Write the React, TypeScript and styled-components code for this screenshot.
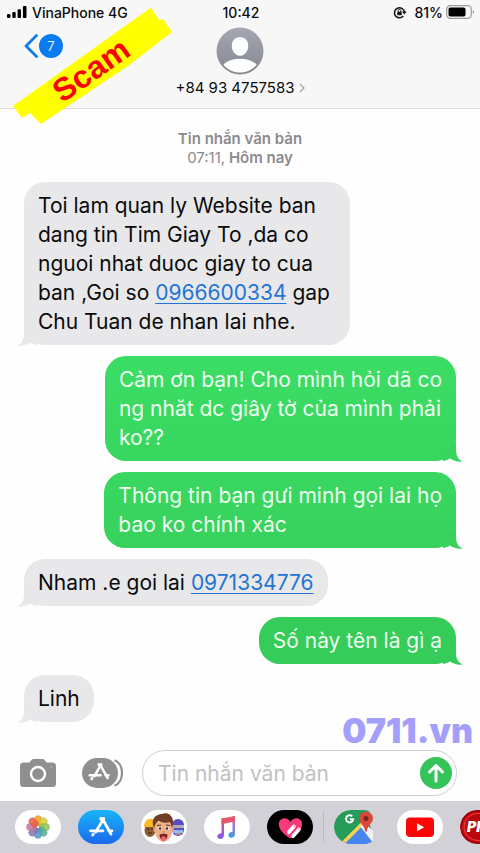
import React from "react";
import styled, { createGlobalStyle } from "styled-components";

const GlobalStyle = createGlobalStyle`
  *, *::before, *::after { box-sizing: border-box; }
  body { margin: 0; background: #fff; font-family: Inter, "Liberation Sans", sans-serif; color: #0b0b0c; }
  button { border: 0; padding: 0; background: none; font: inherit; color: inherit; cursor: pointer; }
  svg { display: block; flex: none; }
`;

const Screen = styled.div`
  position: relative;
  display: flex;
  flex-direction: column;
  min-height: 100vh;
  overflow: hidden;
  background: #fefefe;
`;

const Top = styled.header`
  background: #f7f7f7;
  border-bottom: 1px solid #dcdcde;
`;

const StatusBar = styled.div`
  display: grid;
  grid-template-columns: 1fr auto 1fr;
  align-items: center;
  height: 24px;
  padding: 0 5px 0 7px;
  font-size: 14px;
  font-weight: 500;
`;

const StatusGroup = styled.div<{ $end?: boolean }>`
  display: flex;
  align-items: center;
  justify-content: ${(p) => (p.$end ? "flex-end" : "flex-start")};
  gap: ${(p) => (p.$end ? "3px" : "5px")};
`;

const Percent = styled.span`
  margin-left: 4px;
`;

const NavBar = styled.div`
  display: grid;
  grid-template-columns: 1fr auto 1fr;
  height: 84px;
  padding: 3px 24px 0;
`;

const BackButton = styled.button`
  display: flex;
  align-items: center;
  justify-self: start;
  align-self: start;
  gap: 1px;
  height: 24px;
  margin-top: 7px;
`;

const Unread = styled.span`
  display: grid;
  place-items: center;
  width: 24px;
  height: 24px;
  border-radius: 50%;
  background: #0b7bf2;
  color: #e4f1ff;
  font-size: 13px;
`;

const Contact = styled.button`
  display: flex;
  flex-direction: column;
  align-items: center;
  align-self: start;
  gap: 2px;
`;

const ContactName = styled.span`
  display: flex;
  align-items: center;
  gap: 4px;
  font-size: 15px;
  line-height: 22px;
`;

const Sticker = styled.div`
  position: absolute;
  left: 13px;
  top: 7px;
  width: 160px;
  height: 118px;
  pointer-events: none;
`;

const StickerText = styled.strong`
  position: absolute;
  inset: 8px 4px 0 0;
  display: grid;
  place-items: center;
  color: #fb0207;
  font-family: "Liberation Sans", Arial, sans-serif;
  font-size: 32px;
  line-height: 32px;
  transform: rotate(-35deg);
`;

const Thread = styled.main`
  display: flex;
  flex: 1;
  flex-direction: column;
  gap: 11px;
  padding: 20px 24px 0;
`;

const Stamp = styled.p`
  margin: 0 0 4px;
  text-align: center;
  color: #8b8b8f;
  font-size: 15px;
  font-weight: 600;
  line-height: 19px;

  span { display: block; }
  time { font-weight: 400; }
`;

const Bubble = styled.div<{ $sent?: boolean; $fill: string; $wide?: boolean }>`
  position: relative;
  align-self: ${(p) => (p.$sent ? "flex-end" : "flex-start")};
  padding: 9px ${(p) => (p.$wide ? "20px" : "14px")} 9px 14px;
  border-radius: 21px;
  background: ${(p) => p.$fill};
  color: ${(p) => (p.$sent ? "#effdf0" : "#0b0b0c")};
  font-size: 21px;
  line-height: 29px;

  > svg {
    position: absolute;
    bottom: -1px;
    ${(p) => (p.$sent ? "right: -7px;" : "left: -7px; transform: scaleX(-1);")}
  }
`;

const Line = styled.span`
  display: block;
`;

const Phone = styled.a`
  color: #1f74d4;
  text-decoration: underline;
  text-decoration-thickness: 1px;
  text-underline-offset: 3px;
`;

const Watermark = styled.div`
  position: absolute;
  right: 7px;
  bottom: 54px;
  color: #a39ffb;
  font-size: 34px;
  font-weight: 900;
  line-height: 32px;
`;

const Composer = styled.form`
  position: relative;
  display: flex;
  align-items: center;
  padding: 0 23px 5px 20px;
`;

const IconButton = styled.button<{ $gap: string }>`
  margin-right: ${(p) => p.$gap};
`;

const Field = styled.div`
  display: flex;
  flex: 1;
  align-items: center;
  min-width: 0;
  height: 46px;
  padding: 0 4px 0 15px;
  border: 1px solid #cfcdd1;
  border-radius: 23px;
  background: #fff;
`;

const Input = styled.input`
  flex: 1;
  min-width: 0;
  border: 0;
  padding: 0;
  outline: 0;
  background: transparent;
  font: inherit;
  font-size: 21px;
  line-height: 29px;

  &::placeholder { color: #c1c1c4; opacity: 1; }
`;

const Send = styled.button`
  display: grid;
  place-items: center;
  width: 32px;
  height: 32px;
  border-radius: 50%;
  background: #34c45a;
`;

const Dock = styled.nav`
  display: flex;
  align-items: center;
  gap: 17px;
  height: 52px;
  padding-left: 15px;
  overflow: hidden;
  background: #d1d1d7;
`;

const Divider = styled.span`
  flex: none;
  width: 1px;
  height: 30px;
  margin: 0 -7px;
  background: #b9b9c0;
`;

const AppPill = styled.button<{ $bg: string }>`
  flex: none;
  width: 46px;
  height: 34px;
  border-radius: 17px;
  overflow: hidden;
  background: ${(p) => p.$bg};
`;

const Tail = ({ color }: { color: string }) => (
  <svg width="24" height="20" viewBox="0 0 24 20" aria-hidden="true">
    <path d="M17 0V8C17 13 19 18 24 19.500C19 20 14 19 11 16.500Q9 18.200 4 19L2 10Z" fill={color} />
  </svg>
);

const Signal = () => (
  <svg width="20" height="12" viewBox="0 0 20 12" aria-hidden="true">
    <rect x="0" y="8" width="3.4" height="4" rx="1" />
    <rect x="5.3" y="6" width="3.4" height="6" rx="1" />
    <rect x="10.6" y="3.3" width="3.4" height="8.7" rx="1" />
    <rect x="15.9" y="0" width="3.6" height="12" rx="1" />
  </svg>
);

const RotationLock = () => (
  <svg width="14" height="13" viewBox="0 0 14 13" fill="none" aria-hidden="true">
    <path d="M10.3 10A5 5 0 1 1 11.4 6" stroke="#111" strokeWidth="1.5" />
    <path d="M9 5.4h4.6L11.4 8.5Z" fill="#111" />
    <rect x="4.3" y="5.8" width="4.4" height="3.4" rx=".6" fill="#111" />
    <path d="M5.2 6V4.8a1.3 1.3 0 0 1 2.6 0V6" stroke="#111" strokeWidth=".9" />
  </svg>
);

const Battery = () => (
  <svg width="29" height="14" viewBox="0 0 29 14" fill="none" aria-hidden="true">
    <rect x=".7" y=".7" width="24.6" height="12.6" rx="3.6" stroke="#9c9c9e" strokeWidth="1.2" />
    <rect x="2.5" y="2.5" width="17" height="9" rx="1.8" fill="#000" />
    <path d="M26.8 5c1.7.6 1.7 3.4 0 4Z" fill="#9c9c9e" />
  </svg>
);

const Avatar = () => (
  <svg width="48" height="48" viewBox="0 0 48 48" aria-hidden="true">
    <defs>
      <linearGradient id="avatarFill" x1="0" y1="0" x2="0" y2="1">
        <stop stopColor="#a4a7b2" />
        <stop offset="1" stopColor="#858891" />
      </linearGradient>
      <clipPath id="avatarClip"><circle cx="24" cy="24" r="21.6" /></clipPath>
    </defs>
    <circle cx="24" cy="24" r="23.5" fill="url(#avatarFill)" />
    <g fill="#fff" clipPath="url(#avatarClip)">
      <path d="M24 10c5 0 8.2 3.7 8.2 9 0 5.2-3.5 9.8-8.2 9.8s-8.2-4.6-8.2-9.8c0-5.3 3.2-9 8.2-9Z" />
      <path d="M5 42c2-6 7-8.400 12-9.600 4-1 10-1 14 0 5 1.200 10 3.600 12 9.600v6H5Z" />
    </g>
  </svg>
);

const Camera = () => (
  <svg width="36" height="28" viewBox="0 0 36 28" aria-hidden="true">
    <path d="M3.500 3.500H9.500L11.500 1Q12.300 0 13.500 0h9Q23.700 0 24.500 1l2 2.500h6Q36 3.500 36 7v17.500Q36 28 32.500 28h-29Q0 28 0 24.500V7Q0 3.500 3.500 3.500Z" fill="#8f8f92" />
    <circle cx="18" cy="15" r="7" fill="none" stroke="#fff" strokeWidth="2.400" />
    <circle cx="31" cy="8" r="1" fill="#aaaaad" />
  </svg>
);

const StoreMark = () => (
  <g fill="none" stroke="#fff" strokeWidth="2.800" strokeLinecap="round">
    <path d="M13.300 0.500 22 16" />
    <path d="M11.700 0.500l1.600 2.800M14.800 0.500 6.700 14" />
    <path d="M1.500 12.800h12.500M19.700 12.800h3.300" />
    <path d="M4.300 16.100l-.6 1" />
  </g>
);

const StoreButtonIcon = () => (
  <svg width="41" height="30" viewBox="0 0 41 30" aria-hidden="true">
    <path d="M32.500 2.300C42.500 6 42.500 24 32.500 27.700" fill="none" stroke="#8f8f92" strokeWidth="2.200" />
    <rect width="36" height="30" rx="15" fill="#8f8f92" />
    <g transform="translate(6.300 6) scale(.88)"><StoreMark /></g>
  </svg>
);

const Photos = () => {
  const petals = ["#f5a31b", "#d9d438", "#8fc655", "#54b394", "#5499cf", "#8679b5", "#c978a4", "#ed5c45"];
  return (
    <svg width="46" height="34" viewBox="0 0 46 34" aria-hidden="true">
      {petals.map((color, i) => (
        <rect key={color} x="19.500" y="5.400" width="7.200" height="10.600" rx="3.600" fill={color} fillOpacity=".88" stroke="#696050" strokeOpacity=".3" strokeWidth=".5" transform={`rotate(${i * 45} 23 17)`} />
      ))}
      <circle cx="23" cy="17" r="1" fill="#fff" />
    </svg>
  );
};

const Store = () => (
  <svg width="46" height="34" viewBox="0 0 46 34" aria-hidden="true">
    <g transform="translate(11 8)"><StoreMark /></g>
  </svg>
);

const Memoji = () => (
  <svg width="46" height="34" viewBox="0 0 46 34" aria-hidden="true">
    <ellipse cx="9" cy="20" rx="5.500" ry="7" fill="#8d5a35" />
    <path d="M3 17c0-10 11-11 13-2l-3 2Z" fill="#f7b928" />
    <path d="M6 19h2M10 19h2M7 23h4" stroke="#392114" strokeWidth="1" />
    <rect x="31" y="9" width="12" height="17" rx="6" fill="#574bc8" />
    <path d="M31 15h12v3H31ZM32 20h10v3H32Z" fill="#93b9f4" />
    <path d="M33 16.500h8M34 24h6" stroke="#d69c65" strokeWidth="1.600" />
    <ellipse cx="14" cy="19" rx="2" ry="3" fill="#dd9c75" />
    <ellipse cx="31" cy="19" rx="2" ry="3" fill="#dd9c75" />
    <path d="M14 12h17v9c0 6-4 10.500-8.500 10.500S14 27 14 21Z" fill="#eeb18b" />
    <path d="M13 18c-4-9 2-14 8-14 7-3 14 4 10 14l-2-6c-4 1-8 1-11-1-3 1-4 4-5 7Z" fill="#713e25" />
    <path d="M16 15.500l4-.5M25 15l4 .5" stroke="#593421" strokeWidth="1.200" />
    <ellipse cx="18.800" cy="18.500" rx="1.900" ry="1.400" fill="#fff" />
    <ellipse cx="26.300" cy="18.500" rx="1.900" ry="1.400" fill="#fff" />
    <circle cx="19" cy="18.500" r="1.200" fill="#3c2b25" />
    <circle cx="26" cy="18.500" r="1.200" fill="#3c2b25" />
    <path d="M21 22h3" stroke="#ca8364" />
    <path d="M18.500 24.500c2-1 6-1 8 0 0 3-1 5-4 6-3-1-4-3-4-6Z" fill="#7c2027" />
    <path d="M20.500 27c1-1 3-1 4 0v3c0 2-4 2-4 0Z" fill="#ed6872" />
  </svg>
);

const Music = () => (
  <svg width="46" height="34" viewBox="0 0 46 34" aria-hidden="true">
    <defs>
      <linearGradient id="noteFill" x1="0" y1="0" x2="0" y2="1">
        <stop stopColor="#ed5475" />
        <stop offset=".45" stopColor="#a579ce" />
        <stop offset="1" stopColor="#389ee1" />
      </linearGradient>
      <linearGradient id="noteLeft" x1="0" y1="0" x2="0" y2="1">
        <stop stopColor="#ed5475" />
        <stop offset="1" stopColor="#7c5cf0" />
      </linearGradient>
    </defs>
    <path d="M28.500 6.500 31 6v17.500c0 6-7.500 5-6.500 1 .5-2 2-2.300 4-2.700Z" fill="url(#noteFill)" />
    <path d="M17.500 8.500 20 8v17c0 5.500-7.200 5-6.700 1 .3-2 2.200-2.500 4.200-3Z" fill="url(#noteLeft)" />
    <path d="M17.500 8.500 31 6v5.500l-13.500 2.700Z" fill="#e3586f" />
  </svg>
);

const Heart = () => (
  <svg width="46" height="34" viewBox="0 0 46 34" aria-hidden="true">
    <path d="M23.500 28.500C9 20 10 10 16 8.500c3-.8 6 1 7.500 3.500 1.500-2.500 4.500-4.300 7.500-3.500 6 1.500 7 11.500-7.500 20Z" fill="#fb3b78" />
    <path d="M21.800 22.300 27 16.300M26 26.200l6-6.700" stroke="#fff" strokeWidth="3.600" strokeLinecap="round" />
    <path d="m26.300 16 1.400 1M31.300 19.300l1.400 1" stroke="#fb3b78" strokeWidth=".9" />
  </svg>
);

const Maps = () => (
  <svg width="46" height="34" viewBox="0 0 46 34" aria-hidden="true">
    <defs><clipPath id="mapClip"><path d="M17 0h17l5 9v25H17a17 17 0 0 1 0-34Z" /></clipPath></defs>
    <g clipPath="url(#mapClip)">
      <rect width="46" height="34" fill="#279b59" />
      <path d="M33 4h8v30Z" fill="#d1d1d7" />
      <path d="M6 36 27 15 41 36Z" fill="#4685f0" />
      <path d="M7 35 29 13" stroke="#f8d155" strokeWidth="3.500" />
      <path d="m26 16 14 18V22l-8-8Z" fill="#f1f1f5" />
    </g>
    <path d="M18.200 6.300A3.600 3.600 0 1 0 19.200 9.200H15.800" fill="none" stroke="#fff" strokeWidth="1.900" />
    <path d="M32 1.500a6.900 6.900 0 0 1 6.900 6.900c0 5.200-5.400 6-6.100 13.100h-1.600c-.7-7.100-6.100-7.900-6.100-13.100A6.900 6.900 0 0 1 32 1.500Z" fill="#da4638" />
    <circle cx="32" cy="8.500" r="2.500" fill="#77261f" />
  </svg>
);

const YouTube = () => (
  <svg width="46" height="34" viewBox="0 0 46 34" aria-hidden="true">
    <rect x="9" y="7.500" width="28" height="19.500" rx="4" fill="#fb0505" />
    <path d="m20 13.200 7.200 4-7.200 4Z" fill="#fff" />
  </svg>
);

const Ring = () => (
  <svg width="46" height="34" viewBox="0 0 46 34" aria-hidden="true">
    <rect x="1" y="1" width="44" height="32" rx="16" fill="#c90d12" stroke="#9c0508" strokeWidth="2" />
    <rect x="4" y="3.500" width="38" height="27" rx="13.500" fill="#b9080d" stroke="#ef4141" />
    <text x="7" y="22" fill="#fff" fontSize="14" fontWeight="900" fontStyle="italic" fontFamily="Inter, sans-serif">PRO</text>
  </svg>
);

const GREY = "#e8e8ea";

const messages: { sent?: boolean; wide?: boolean; fill: string; tail: string; lines: React.ReactNode[] }[] = [
  {
    wide: true,
    fill: GREY,
    tail: GREY,
    lines: [
      "Toi lam quan ly Website ban",
      "dang tin Tim Giay To ,da co",
      "nguoi nhat duoc giay to cua",
      <>ban ,Goi so <Phone href="tel:0966600334">0966600334</Phone> gap</>,
      "Chu Tuan de nhan lai nhe.",
    ],
  },
  {
    sent: true,
    fill: "linear-gradient(#3bdd65, #38d65f)",
    tail: "#38d65f",
    lines: ["Cảm ơn bạn! Cho mình hỏi dã co", "ng nhăt dc giây tờ của mình phải", "ko??"],
  },
  {
    sent: true,
    fill: "linear-gradient(#39d861, #37d15c)",
    tail: "#37d15c",
    lines: ["Thông tin bạn gưi minh gọi lai họ", "bao ko chính xác"],
  },
  { fill: GREY, tail: GREY, lines: [<>Nham .e goi lai <Phone href="tel:0971334776">0971334776</Phone></>] },
  { sent: true, fill: "#35cc59", tail: "#35cc59", lines: ["Số này tên là gì ạ"] },
  { fill: GREY, tail: GREY, lines: ["Linh"] },
];

export default function App() {
  return (
    <>
      <GlobalStyle />
      <Screen>
        <Top>
          <StatusBar>
            <StatusGroup><Signal />VinaPhone 4G</StatusGroup>
            <span>10:42</span>
            <StatusGroup $end><RotationLock /><Percent>81%</Percent><Battery /></StatusGroup>
          </StatusBar>
          <NavBar>
            <BackButton aria-label="Back, 7 unread">
              <svg width="14" height="24" viewBox="0 0 14 24" fill="none" aria-hidden="true">
                <path d="M12.500 1.500 2 12l10.500 10.500" stroke="#0b7bf2" strokeWidth="2.800" strokeLinecap="round" strokeLinejoin="round" />
              </svg>
              <Unread>7</Unread>
            </BackButton>
            <Contact>
              <Avatar />
              <ContactName>
                +84 93 4757583
                <svg width="6" height="10" viewBox="0 0 6 10" fill="none" aria-hidden="true">
                  <path d="m1 1 4 4-4 4" stroke="#a5a5a8" strokeWidth="1.300" />
                </svg>
              </ContactName>
            </Contact>
          </NavBar>
        </Top>

        <Thread>
          <Stamp><span>Tin nhắn văn bản</span><time>07:11,</time> Hôm nay</Stamp>
          {messages.map((m, i) => (
            <Bubble key={i} $sent={m.sent} $fill={m.fill} $wide={m.wide}>
              <Tail color={m.tail} />
              {m.lines.map((line, n) => <Line key={n}>{line}</Line>)}
            </Bubble>
          ))}
        </Thread>

        <Composer onSubmit={(e) => e.preventDefault()}>
          <Watermark>0711.vn</Watermark>
          <IconButton type="button" $gap="26px" aria-label="Camera"><Camera /></IconButton>
          <IconButton type="button" $gap="19px" aria-label="Apps"><StoreButtonIcon /></IconButton>
          <Field>
            <Input type="text" placeholder="Tin nhắn văn bản" aria-label="Tin nhắn văn bản" />
            <Send type="submit" aria-label="Send">
              <svg width="18" height="20" viewBox="0 0 18 20" fill="none" aria-hidden="true">
                <path d="M9 18V2.500M2.500 9 9 2.500 15.500 9" stroke="#fff" strokeWidth="3" strokeLinecap="round" strokeLinejoin="round" />
              </svg>
            </Send>
          </Field>
        </Composer>

        <Dock aria-label="Apps">
          <AppPill $bg="#fff" aria-label="Photos"><Photos /></AppPill>
          <AppPill $bg="linear-gradient(#18b5f8, #1c68ed)" aria-label="App Store"><Store /></AppPill>
          <AppPill $bg="#fff" aria-label="Memoji"><Memoji /></AppPill>
          <AppPill $bg="#fff" aria-label="Music"><Music /></AppPill>
          <AppPill $bg="#000" aria-label="Digital Touch"><Heart /></AppPill>
          <Divider />
          <AppPill $bg="transparent" aria-label="Google Maps"><Maps /></AppPill>
          <AppPill $bg="#fff" aria-label="YouTube"><YouTube /></AppPill>
          <AppPill $bg="transparent" aria-label="Pro"><Ring /></AppPill>
        </Dock>

        <Sticker>
          <svg width="160" height="118" viewBox="0 0 160 118" aria-hidden="true">
            <path d="M0 99 138 0.500 146 13 150 12 159 25 115 59 28 117 17 106 9 111Z" fill="#ffff00" />
          </svg>
          <StickerText>Scam</StickerText>
        </Sticker>
      </Screen>
    </>
  );
}
